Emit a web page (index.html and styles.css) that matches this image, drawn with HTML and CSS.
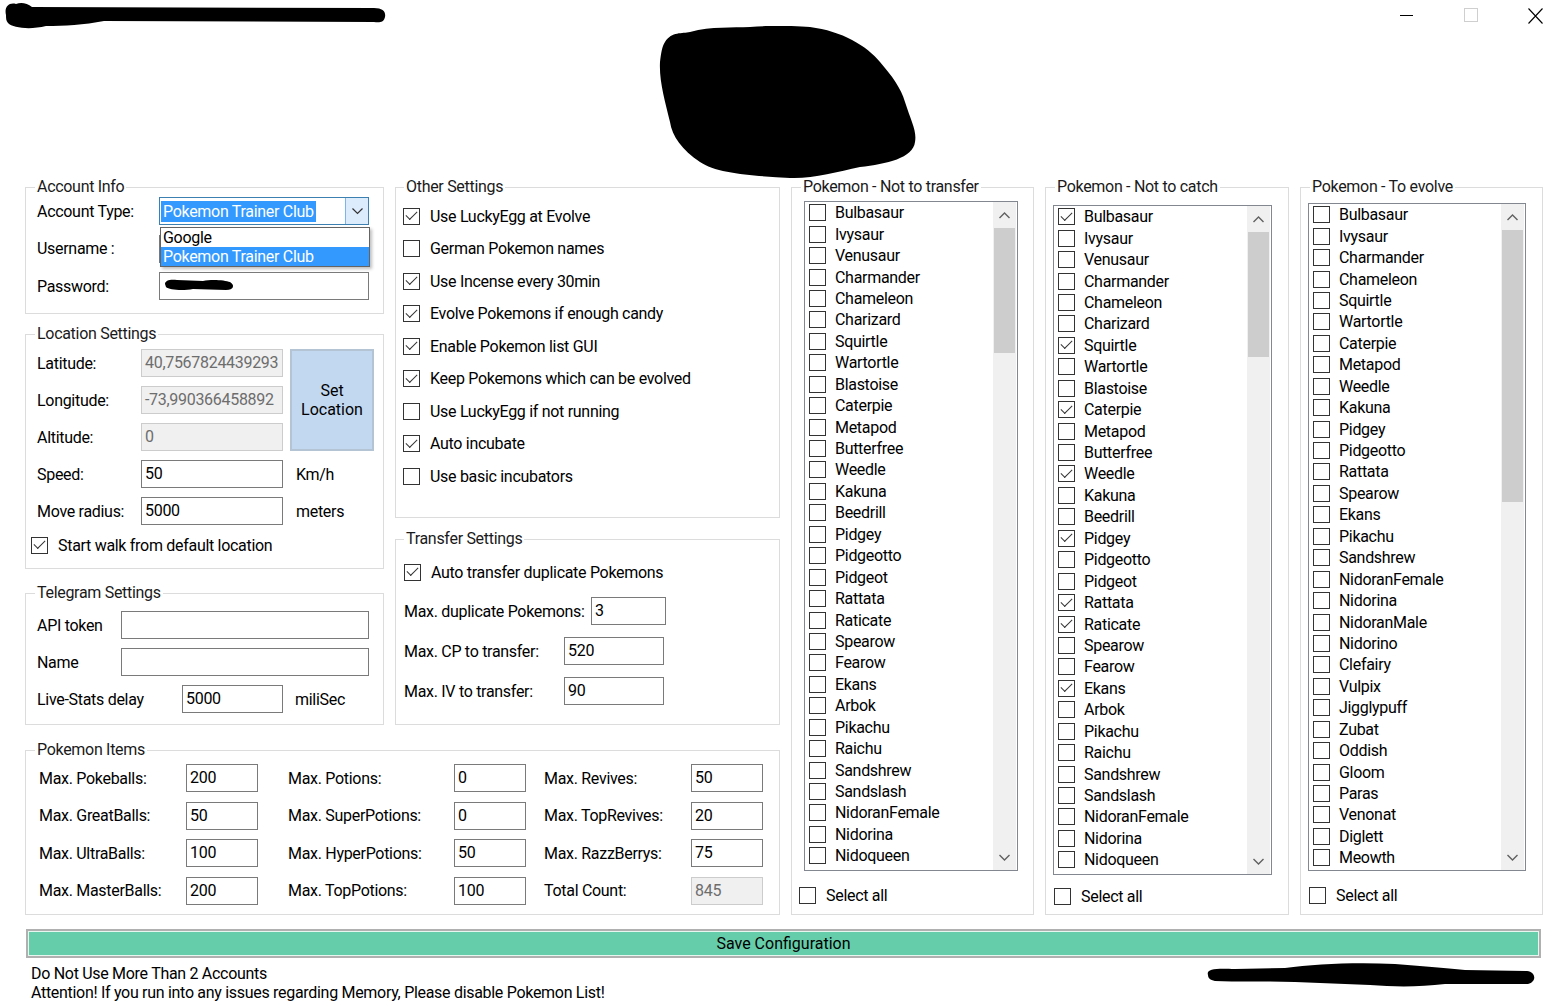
FILE: index.html
```html
<!DOCTYPE html>
<html lang="en">
<head>
    <meta charset="UTF-8">
    <title>Bot Configuration</title>
    <link rel="stylesheet" href="styles.css">
</head>
<body>
    <div class="titlebar">
        <svg class="title-scribble" viewBox="0 0 382 28">
            <path d="M2 13 C0 5 5 0 12 2 C17 0 23 1 28 5 L370 6 C379 6 382 10 381 15 C380 20 376 21 370 20 L100 19 C80 23 60 24 42 24 C26 28 9 26 4 21 C2 19 2 16 2 13 Z"/>
        </svg>
        <svg class="logo-blot" viewBox="0 0 260 153">
            <path d="M8 16 C15 5 25 8 33 6 C55 0 75 2 93 1 C120 -1 140 0 153 1 C185 5 210 20 223 36 C235 50 244 62 248 76 C254 95 260 105 258 116 C256 132 230 138 203 141 C180 146 155 153 133 152 C100 150 60 148 43 136 C25 124 15 110 13 96 C8 75 2 55 3 36 C4 28 5 20 8 16 Z"/>
        </svg>
        <div class="window-controls">
            <svg width="14" height="15" viewBox="0 0 14 15"><path d="M0 7.5 H13" stroke="#000" stroke-width="1"/></svg>
            <svg width="14" height="15" viewBox="0 0 14 15"><rect x="0.5" y="0.5" width="13" height="13" fill="none" stroke="#cfcfcf"/></svg>
            <svg width="15" height="16" viewBox="0 0 15 16"><path d="M0.5 0.5 L14.5 15.5 M14.5 0.5 L0.5 15.5" stroke="#000" stroke-width="1.1"/></svg>
        </div>
    </div>

    <div class="main">
        <div class="left">
            <div class="left-top">
                <div class="col col-a">
                    <fieldset class="group account">
                        <legend>Account Info</legend>
                        <div class="form-grid account-grid">
                            <label>Account Type:</label>
                            <div class="combo">
                                <span class="combo-value">Pokemon Trainer Club</span>
                                <span class="combo-btn">
                                    <svg width="11" height="7" viewBox="0 0 11 7"><path d="M0.5 0.5 L5.5 5.5 L10.5 0.5" fill="none" stroke="#333" stroke-width="1.2"/></svg>
                                </span>
                                <div class="combo-list">
                                    <div class="combo-item">Google</div>
                                    <div class="combo-item selected">Pokemon Trainer Club</div>
                                </div>
                            </div>
                            <label>Username :</label>
                            <div class="input"></div>
                            <label>Password:</label>
                            <div class="input">
                                <svg class="pw-scribble" viewBox="0 0 72 14">
                                    <path d="M2 6 C2 2 8 1 14 2 L40 3 C48 1 62 2 67 4 C72 7 71 12 63 12 L30 11 C20 13 6 12 3 9 Z"/>
                                </svg>
                            </div>
                        </div>
                    </fieldset>

                    <fieldset class="group location">
                        <legend>Location Settings</legend>
                        <div class="form-grid location-grid">
                            <label>Latitude:</label>
                            <div class="input disabled">40,7567824439293</div>
                            <button class="set-location">Set<br>Location</button>
                            <label>Longitude:</label>
                            <div class="input disabled">-73,990366458892</div>
                            <label>Altitude:</label>
                            <div class="input disabled">0</div>
                            <label>Speed:</label>
                            <div class="input">50</div>
                            <span class="unit">Km/h</span>
                            <label>Move radius:</label>
                            <div class="input">5000</div>
                            <span class="unit">meters</span>
                        </div>
                        <div class="check-row walk-row"><span class="cb checked"></span>Start walk from default location</div>
                    </fieldset>

                    <fieldset class="group telegram">
                        <legend>Telegram Settings</legend>
                        <div class="tg-row"><label class="tg-label">API token</label><div class="input tg-input"></div></div>
                        <div class="tg-row"><label class="tg-label">Name</label><div class="input tg-input"></div></div>
                        <div class="tg-row"><label class="tg-label wide">Live-Stats delay</label><div class="input tg-short">5000</div><span class="unit">miliSec</span></div>
                    </fieldset>
                </div>

                <div class="col col-b">
                    <fieldset class="group other">
                        <legend>Other Settings</legend>
                        <div class="check-row"><span class="cb checked"></span>Use LuckyEgg at Evolve</div>
                        <div class="check-row"><span class="cb"></span>German Pokemon names</div>
                        <div class="check-row"><span class="cb checked"></span>Use Incense every 30min</div>
                        <div class="check-row"><span class="cb checked"></span>Evolve Pokemons if enough candy</div>
                        <div class="check-row"><span class="cb checked"></span>Enable Pokemon list GUI</div>
                        <div class="check-row"><span class="cb checked"></span>Keep Pokemons which can be evolved</div>
                        <div class="check-row"><span class="cb"></span>Use LuckyEgg if not running</div>
                        <div class="check-row"><span class="cb checked"></span>Auto incubate</div>
                        <div class="check-row"><span class="cb"></span>Use basic incubators</div>
                    </fieldset>

                    <fieldset class="group transfer">
                        <legend>Transfer Settings</legend>
                        <div class="check-row"><span class="cb checked"></span>Auto transfer duplicate Pokemons</div>
                        <div class="tr-row"><label class="tr-dup">Max. duplicate Pokemons:</label><div class="input tr-dup-input">3</div></div>
                        <div class="tr-row"><label class="tr-cp">Max. CP to transfer:</label><div class="input tr-input">520</div></div>
                        <div class="tr-row"><label class="tr-cp">Max. IV to transfer:</label><div class="input tr-input">90</div></div>
                    </fieldset>
                </div>
            </div>

            <fieldset class="group items">
                <legend>Pokemon Items</legend>
                <div class="items-grid">
                    <label>Max. Pokeballs:</label><div class="input">200</div>
                    <label class="c2">Max. Potions:</label><div class="input">0</div>
                    <label class="c3">Max. Revives:</label><div class="input">50</div>

                    <label>Max. GreatBalls:</label><div class="input">50</div>
                    <label class="c2">Max. SuperPotions:</label><div class="input">0</div>
                    <label class="c3">Max. TopRevives:</label><div class="input">20</div>

                    <label>Max. UltraBalls:</label><div class="input">100</div>
                    <label class="c2">Max. HyperPotions:</label><div class="input">50</div>
                    <label class="c3">Max. RazzBerrys:</label><div class="input">75</div>

                    <label>Max. MasterBalls:</label><div class="input">200</div>
                    <label class="c2">Max. TopPotions:</label><div class="input">100</div>
                    <label class="c3">Total Count:</label><div class="input disabled">845</div>
                </div>
            </fieldset>
        </div>

        <fieldset class="group poke-group g1">
            <legend>Pokemon - Not to transfer</legend>
            <div class="listbox" id="listTransfer">
                <div class="list-items"></div>
                <div class="scrollbar">
                    <span class="sb-arrow"><svg width="11" height="7" viewBox="0 0 11 7"><path d="M0.5 6 L5.5 1 L10.5 6" fill="none" stroke="#606060" stroke-width="1.4"/></svg></span>
                    <span class="sb-thumb"></span>
                    <span class="sb-track"></span>
                    <span class="sb-arrow"><svg width="11" height="7" viewBox="0 0 11 7"><path d="M0.5 1 L5.5 6 L10.5 1" fill="none" stroke="#606060" stroke-width="1.4"/></svg></span>
                </div>
            </div>
            <div class="check-row select-all"><span class="cb"></span>Select all</div>
        </fieldset>

        <fieldset class="group poke-group g2">
            <legend>Pokemon - Not to catch</legend>
            <div class="listbox" id="listCatch">
                <div class="list-items"></div>
                <div class="scrollbar">
                    <span class="sb-arrow"><svg width="11" height="7" viewBox="0 0 11 7"><path d="M0.5 6 L5.5 1 L10.5 6" fill="none" stroke="#606060" stroke-width="1.4"/></svg></span>
                    <span class="sb-thumb"></span>
                    <span class="sb-track"></span>
                    <span class="sb-arrow"><svg width="11" height="7" viewBox="0 0 11 7"><path d="M0.5 1 L5.5 6 L10.5 1" fill="none" stroke="#606060" stroke-width="1.4"/></svg></span>
                </div>
            </div>
            <div class="check-row select-all"><span class="cb"></span>Select all</div>
        </fieldset>

        <fieldset class="group poke-group g3">
            <legend>Pokemon - To evolve</legend>
            <div class="listbox" id="listEvolve">
                <div class="list-items"></div>
                <div class="scrollbar">
                    <span class="sb-arrow"><svg width="11" height="7" viewBox="0 0 11 7"><path d="M0.5 6 L5.5 1 L10.5 6" fill="none" stroke="#606060" stroke-width="1.4"/></svg></span>
                    <span class="sb-thumb long"></span>
                    <span class="sb-track"></span>
                    <span class="sb-arrow"><svg width="11" height="7" viewBox="0 0 11 7"><path d="M0.5 1 L5.5 6 L10.5 1" fill="none" stroke="#606060" stroke-width="1.4"/></svg></span>
                </div>
            </div>
            <div class="check-row select-all"><span class="cb"></span>Select all</div>
        </fieldset>
    </div>

    <button class="save-btn">Save Configuration</button>

    <div class="footer">
        <div class="notes">
            <p>Do Not Use More Than 2 Accounts</p>
            <p>Attention! If you run into any issues regarding Memory, Please disable Pokemon List!</p>
        </div>
        <svg class="footer-scribble" viewBox="0 0 332 25">
            <path d="M3 13 C1 7 10 6 30 7 L80 6 C110 2 150 0 190 2 C215 4 240 6 260 8 L322 9 C331 10 332 20 323 22 L240 22 C215 25 190 25 165 23 L90 20 C60 19 30 20 10 19 C5 18 3 16 3 13 Z"/>
        </svg>
    </div>

    <script>
        const firstGen = ['Bulbasaur', 'Ivysaur', 'Venusaur', 'Charmander', 'Chameleon', 'Charizard',
            'Squirtle', 'Wartortle', 'Blastoise', 'Caterpie', 'Metapod', 'Butterfree', 'Weedle',
            'Kakuna', 'Beedrill', 'Pidgey', 'Pidgeotto', 'Pidgeot', 'Rattata', 'Raticate', 'Spearow',
            'Fearow', 'Ekans', 'Arbok', 'Pikachu', 'Raichu', 'Sandshrew', 'Sandslash',
            'NidoranFemale', 'Nidorina', 'Nidoqueen'];

        const evolvable = ['Bulbasaur', 'Ivysaur', 'Charmander', 'Chameleon', 'Squirtle', 'Wartortle',
            'Caterpie', 'Metapod', 'Weedle', 'Kakuna', 'Pidgey', 'Pidgeotto', 'Rattata', 'Spearow',
            'Ekans', 'Pikachu', 'Sandshrew', 'NidoranFemale', 'Nidorina', 'NidoranMale', 'Nidorino',
            'Clefairy', 'Vulpix', 'Jigglypuff', 'Zubat', 'Oddish', 'Gloom', 'Paras', 'Venonat',
            'Diglett', 'Meowth'];

        const notToCatch = ['Bulbasaur', 'Squirtle', 'Caterpie', 'Weedle', 'Pidgey', 'Rattata', 'Raticate', 'Ekans'];

        function fillList(id, names, checked) {
            const box = document.querySelector('#' + id + ' .list-items');
            names.forEach(name => {
                const row = document.createElement('div');
                row.className = 'list-item';
                const cb = document.createElement('span');
                cb.className = checked.includes(name) ? 'cb checked' : 'cb';
                row.appendChild(cb);
                row.appendChild(document.createTextNode(name));
                box.appendChild(row);
            });
        }

        fillList('listTransfer', firstGen, []);
        fillList('listCatch', firstGen, notToCatch);
        fillList('listEvolve', evolvable, []);
    </script>
</body>
</html>
```

FILE: styles.css
```css
* {
    margin: 0;
    padding: 0;
    box-sizing: border-box;
}

body {
    font-family: Roboto, 'Liberation Sans', sans-serif;
    font-size: 16px;
    letter-spacing: -0.3px;
    color: #000;
    background: #fff;
    width: 1560px;
    height: 1008px;
    overflow: hidden;
}

/* title bar with the redacted name and logo */
.titlebar {
    height: 177px;
    display: grid;
    grid-template-columns: 1fr auto 1fr;
}

.title-scribble {
    width: 382px;
    height: 28px;
    margin: 2px 0 0 4px;
}

.logo-blot {
    width: 260px;
    height: 153px;
    margin: 26px 0 0 14px;
}

.window-controls {
    justify-self: end;
    display: flex;
    align-items: flex-start;
    gap: 50px;
    padding: 8px 17px 0 0;
}

/* layout */
.main {
    display: flex;
    gap: 11px;
    padding-left: 25px;
    height: 738px;
}

.left {
    width: 755px;
    display: flex;
    flex-direction: column;
}

.left-top {
    display: flex;
    gap: 11px;
}

.col {
    display: flex;
    flex-direction: column;
}

.col-a {
    width: 359px;
}

.col-b {
    width: 385px;
}

/* group boxes */
.group {
    --pad: 11px;
    border: 1px solid #dcdcdc;
    padding: 0 0 0 var(--pad);
    margin: 0;
    min-width: 0;
}

.group legend {
    margin-left: calc(9px - var(--pad));
    padding: 0 2px;
    line-height: 20px;
    color: #1a1a1a;
}

.account {
    height: 137px;
}

.location {
    height: 245px;
    margin-top: 10px;
    padding-top: 5px;
}

.telegram {
    height: 142px;
    margin-top: 14px;
    padding-top: 8px;
}

.other {
    --pad: 7px;
    height: 341px;
    padding-top: 3px;
}

.other legend,
.transfer legend {
    margin-left: calc(8px - var(--pad));
}

.transfer {
    --pad: 8px;
    height: 196px;
    margin-top: 11px;
    padding-top: 9px;
}

.items {
    --pad: 13px;
    height: 175px;
    margin-top: 15px;
    padding-top: 4px;
}

/* form controls */
label {
    display: flex;
    align-items: center;
    white-space: nowrap;
}

.input {
    height: 28px;
    border: 1px solid #7a7a7a;
    background: #fff;
    padding-left: 3px;
    line-height: 26px;
    white-space: nowrap;
    overflow: hidden;
    position: relative;
}

.input.disabled {
    background: #f0f0f0;
    border-color: #cccccc;
    color: #6d6d6d;
}

.unit {
    display: flex;
    align-items: center;
    padding-left: 13px;
}

.form-grid {
    display: grid;
    grid-auto-rows: 28px;
}

.account-grid {
    grid-template-columns: 122px 210px;
    row-gap: 9.5px;
}

.combo {
    position: relative;
    height: 28px;
    border: 1px solid #3c7fb1;
    background: #fff;
    display: flex;
    align-items: center;
    padding-left: 1px;
}

.combo-value {
    background: #3399ff;
    color: #fff;
    line-height: 21px;
    padding: 0 2px;
}

.combo-btn {
    margin-left: auto;
    width: 23px;
    height: 26px;
    background: #dcecfc;
    border-left: 1px solid #7eb4ea;
    display: flex;
    align-items: center;
    justify-content: center;
}

.combo-list {
    position: absolute;
    top: 29px;
    left: 0;
    width: 210px;
    border: 1px solid #646464;
    background: #fff;
    box-shadow: 2px 2px 3px rgba(0, 0, 0, 0.25);
    z-index: 2;
}

.combo-item {
    line-height: 19px;
    padding-left: 2px;
}

.combo-item.selected {
    background: #3399ff;
    color: #fff;
}

.pw-scribble {
    position: absolute;
    left: 3px;
    top: 5px;
    width: 72px;
    height: 14px;
}

.location-grid {
    grid-template-columns: 104px 142px 91px;
    row-gap: 9px;
}

.set-location {
    grid-column: 3;
    grid-row: 1 / span 3;
    margin-left: 7px;
    width: 84px;
    font: inherit;
    background: #c2d8f0;
    border: 2px solid #b4c4d4;
    color: #000;
    line-height: 19px;
}

/* checkboxes */
.cb {
    width: 17px;
    height: 17px;
    border: 1px solid #333;
    background: #fff;
    position: relative;
    flex: none;
}

.cb.checked::after {
    content: "";
    position: absolute;
    left: 2px;
    top: 2.5px;
    width: 10px;
    height: 5px;
    border-left: 1.4px solid #333;
    border-bottom: 1.4px solid #333;
    transform: rotate(-45deg);
}

.check-row {
    display: flex;
    align-items: center;
    gap: 10px;
    height: 32.5px;
    white-space: nowrap;
}

.walk-row {
    margin: 6px 0 0 -6px;
    height: 28px;
}

/* telegram */
.tg-row {
    display: flex;
    height: 28px;
    margin-bottom: 9px;
}

.tg-label {
    width: 84px;
}

.tg-label.wide {
    width: 145px;
}

.tg-input {
    width: 248px;
}

.tg-short {
    width: 101px;
}

.tg-row .unit {
    padding-left: 12px;
}

/* transfer */
.transfer .check-row {
    height: 28px;
}

.tr-row {
    display: flex;
    height: 28px;
    margin-top: 11px;
}

.tr-row + .tr-row {
    margin-top: 12px;
}

.tr-dup {
    width: 187px;
}

.tr-dup-input {
    width: 75px;
}

.tr-cp {
    width: 160px;
}

.tr-input {
    width: 100px;
}

/* pokemon items */
.items-grid {
    display: grid;
    grid-template-columns: 147px 72px 196px 72px 165px 72px;
    grid-auto-rows: 28px;
    row-gap: 9.5px;
}

.items-grid .c2 {
    padding-left: 30px;
}

.items-grid .c3 {
    padding-left: 18px;
}

/* pokemon lists */
.poke-group {
    height: 738px;
    --pad: 7px;
}

.g1 {
    width: 243px;
    --pad: 12px;
}

.g2 {
    width: 244px;
}

.g3 {
    width: 243px;
}

.listbox {
    display: flex;
    height: 670px;
    border: 1px solid #828790;
    background: #fff;
}

.g1 .listbox {
    width: 214px;
    margin-top: 4px;
}

.g2 .listbox {
    width: 219px;
    margin-top: 8px;
}

.g3 .listbox {
    width: 218px;
    margin-top: 6px;
    height: 668px;
}

.list-items {
    flex: 1;
    overflow: hidden;
    padding-left: 4px;
}

.list-item {
    display: flex;
    align-items: center;
    gap: 9px;
    height: 21.45px;
    white-space: nowrap;
}

.scrollbar {
    width: 23px;
    margin: 0 1px 0 0;
    background: #f0f0f0;
    display: flex;
    flex-direction: column;
    align-items: center;
}

.sb-arrow {
    height: 26px;
    width: 100%;
    display: flex;
    align-items: center;
    justify-content: center;
    flex: none;
}

.sb-thumb {
    width: 21px;
    height: 125px;
    background: #cdcdcd;
    flex: none;
}

.sb-thumb.long {
    height: 272px;
}

.sb-track {
    flex: 1;
}

.select-all {
    height: 17px;
    margin-top: 15.5px;
    margin-left: -5px;
}

.g2 .select-all {
    margin-top: 12.5px;
    margin-left: 1px;
}

.g3 .select-all {
    margin-top: 15.5px;
    margin-left: 1px;
}

/* save + footer */
.save-btn {
    display: block;
    margin: 14px 0 0 26px;
    width: 1515px;
    height: 29px;
    font: inherit;
    color: #000;
    background: #66cdaa;
    border: 2px solid #b0b0b0;
    box-shadow: inset 0 0 0 1px #e8f6f0;
}

.footer {
    display: flex;
    justify-content: space-between;
    padding: 6px 23px 0 31px;
}

.notes p {
    line-height: 19px;
}

.footer-scribble {
    width: 332px;
    height: 25px;
    margin-top: -2px;
}
```
